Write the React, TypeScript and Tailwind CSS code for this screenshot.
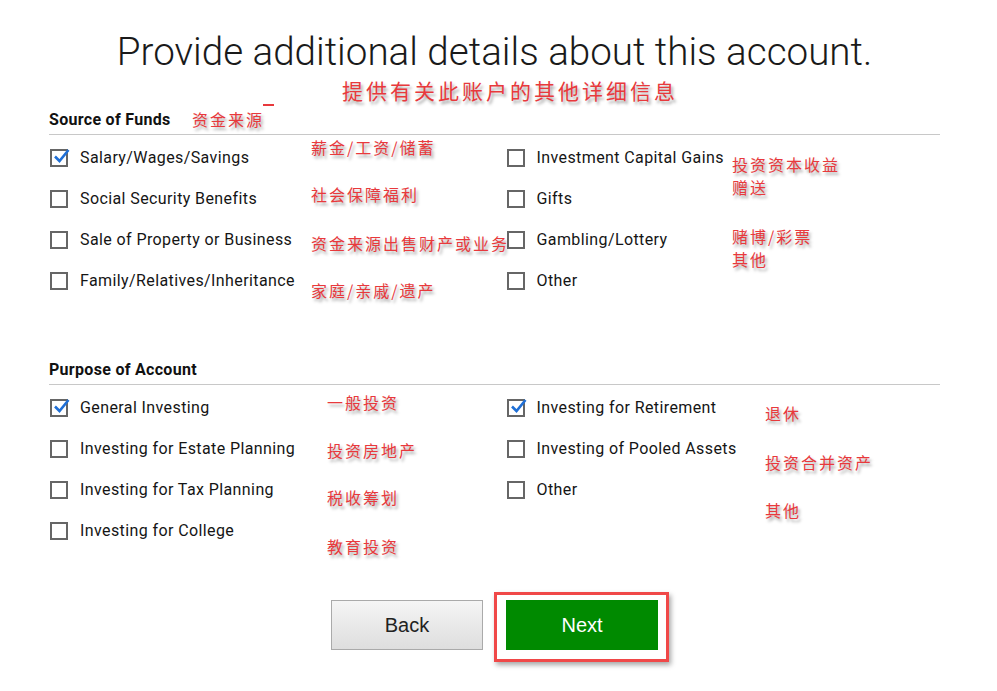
import { useState } from "react";

type Item = { label: string; checked?: boolean };

const funds: Item[][] = [
    [
        { label: "Salary/Wages/Savings", checked: true },
        { label: "Social Security Benefits" },
        { label: "Sale of Property or Business" },
        { label: "Family/Relatives/Inheritance" },
    ],
    [{ label: "Investment Capital Gains" }, { label: "Gifts" }, { label: "Gambling/Lottery" }, { label: "Other" }],
];

const purpose: Item[][] = [
    [
        { label: "General Investing", checked: true },
        { label: "Investing for Estate Planning" },
        { label: "Investing for Tax Planning" },
        { label: "Investing for College" },
    ],
    [{ label: "Investing for Retirement", checked: true }, { label: "Investing of Pooled Assets" }, { label: "Other" }],
];

// red handwritten-style notes laid over the screenshot
const notes = [
    { text: "资金来源", x: 192, y: 110 },
    { text: "薪金/工资/储蓄", x: 311, y: 138 },
    { text: "社会保障福利", x: 311, y: 185 },
    { text: "资金来源出售财产或业务", x: 311, y: 234 },
    { text: "家庭/亲戚/遗产", x: 311, y: 281 },
    { text: "投资资本收益", x: 732, y: 155 },
    { text: "赠送", x: 732, y: 178 },
    { text: "赌博/彩票", x: 732, y: 227 },
    { text: "其他", x: 732, y: 250 },
    { text: "一般投资", x: 327, y: 393 },
    { text: "投资房地产", x: 327, y: 441 },
    { text: "税收筹划", x: 327, y: 488 },
    { text: "教育投资", x: 327, y: 537 },
    { text: "退休", x: 765, y: 404 },
    { text: "投资合并资产", x: 765, y: 453 },
    { text: "其他", x: 765, y: 501 },
];

const cjk = { fontFamily: '"Noto Sans CJK SC", sans-serif', textShadow: "2px 3px 3px rgba(0,0,0,0.35)" };

function Checkbox({ item }: { item: Item }) {
    const [on, setOn] = useState(!!item.checked);
    return (
        <label className="flex items-center h-[41px] cursor-pointer" onClick={() => setOn(!on)}>
            <span className="relative w-[18px] h-[18px] border-2 border-[#666] bg-white shrink-0 ml-px">
                {on && (
                    <svg className="absolute -top-[4px] left-[1px]" width="18" height="18" viewBox="0 0 18 18">
                        <path d="M2 9.5 L6.5 14 L15.5 3" fill="none" stroke="#1f6fd6" strokeWidth="2.6" />
                    </svg>
                )}
            </span>
            <span className="ml-[12px] text-[16px] tracking-[0.4px] text-[#151515]">{item.label}</span>
        </label>
    );
}

function Section({ title, cols }: { title: string; cols: Item[][] }) {
    return (
        <section>
            <h2 className="text-[16px] leading-[20px] font-bold tracking-[0.3px] text-[#111] pb-[4px] border-b border-[#c8c8c8]">
                {title}
            </h2>
            <div className="grid grid-cols-2 mt-[2px]">
                {cols.map((col, i) => (
                    <div key={i} className={i === 1 ? "pl-[11px]" : ""}>
                        {col.map((it) => (
                            <Checkbox key={it.label} item={it} />
                        ))}
                    </div>
                ))}
            </div>
        </section>
    );
}

export default function App() {
    return (
        <div className="relative w-[997px] h-[691px] bg-white overflow-hidden" style={{ fontFamily: "Roboto, sans-serif" }}>
            <div className="w-[891px] ml-[49px] pt-[29px]">
                <h1 className="text-center text-[38.6px] leading-[46px] font-light text-[#1a1a1a]">
                    Provide additional details about this account.
                </h1>

                <div className="mt-[35px]">
                    <Section title="Source of Funds" cols={funds} />
                </div>
                <div className="mt-[59px]">
                    <Section title="Purpose of Account" cols={purpose} />
                </div>

                <div className="flex justify-center gap-[23px] mt-[49px] font-['Liberation_Sans',Arial,sans-serif]">
                    <button className="w-[152px] h-[50px] border border-[#aaa] bg-gradient-to-b from-[#f5f5f5] to-[#dedede] text-[20px] text-[#222]">
                        Back
                    </button>
                    <div className="relative">
                        <button className="w-[152px] h-[50px] bg-[#008a00] text-[20px] text-white">Next</button>
                        {/* annotation frame */}
                        <div className="absolute -top-[8px] -left-[12px] -right-[11px] -bottom-[12px] border-[3px] border-[#f04848] shadow-[2px_3px_5px_rgba(0,0,0,0.35)] pointer-events-none" />
                    </div>
                </div>
            </div>

            <div
                className="absolute left-[342px] top-[78px] text-[21px] leading-[24px] tracking-[3px] text-[#e8393c]"
                style={cjk}
            >
                提供有关此账户的其他详细信息
            </div>
            <div className="absolute left-[263px] top-[104px] w-[11px] h-[2px] bg-[#e8393c]" />
            {notes.map((n) => (
                <div
                    key={n.text + n.y}
                    className="absolute text-[16px] leading-[18px] tracking-[2px] text-[#e8393c]"
                    style={{ ...cjk, left: n.x, top: n.y }}
                >
                    {n.text}
                </div>
            ))}
        </div>
    );
}
